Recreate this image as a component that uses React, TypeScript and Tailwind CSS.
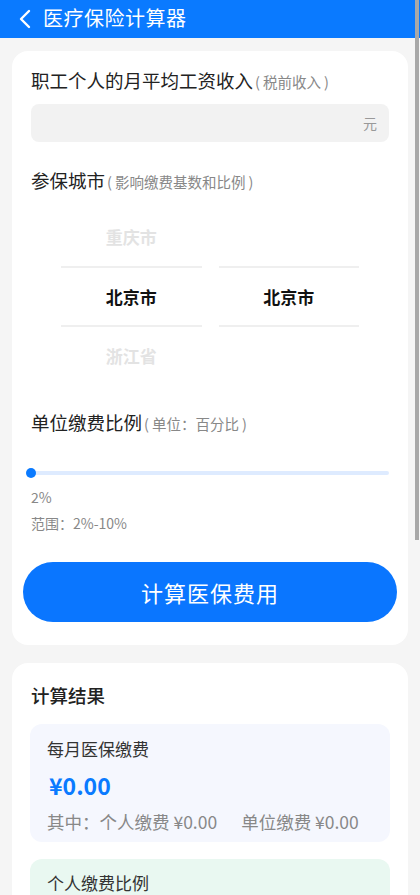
import React, { useState } from 'react';

const font = { fontFamily: '"Noto Sans CJK SC", "Noto Sans", sans-serif' };

// back chevron in header
const BackIcon = () => (
  <svg width="14" height="20" viewBox="0 0 14 20" fill="none">
    <path d="M11 2L3 10L11 18" stroke="white" strokeWidth="2.4" strokeLinecap="round" strokeLinejoin="round" />
  </svg>
);

const Label = ({ title, hint }: { title: string; hint: string }) => (
  <div className="flex items-baseline h-[26px] leading-[26px]">
    <span className="text-[18.5px] text-[#222]">{title}</span>
    <span className="text-[14.5px] text-[#888] flex">
      <span className="ml-[2px] mr-[3px]">(</span>
      {hint}
      <span className="ml-[3px]">)</span>
    </span>
  </div>
);

const PickerColumn = ({ items }: { items: [string, string, string] }) => (
  <div className="flex-1 flex flex-col">
    <div className="h-[60px] flex items-center justify-center text-[17px] font-bold text-[#e3e3e3] border-b-2 border-[#efefef]">
      {items[0]}
    </div>
    <div className="h-[59px] flex items-center justify-center text-[17px] font-bold text-[#111] border-b-2 border-[#efefef]">
      {items[1]}
    </div>
    <div className="h-[57px] flex items-center justify-center text-[17px] font-bold text-[#e3e3e3]">
      {items[2]}
    </div>
  </div>
);

export default function App() {
  const [salary, setSalary] = useState('');
  const [ratio] = useState(2);

  return (
    <div className="min-h-[895px] bg-[#f5f5f5] relative overflow-hidden" style={font}>
      {/* header */}
      <div className="h-[38px] bg-[#0a7aff] flex items-center pl-[18px] gap-[11px]">
        <BackIcon />
        <span className="text-[20px] text-white tracking-[0.5px] leading-none -mt-[3px]">医疗保险计算器</span>
      </div>

      {/* input card */}
      <div className="mx-3 mt-[13px] bg-white rounded-2xl px-[19px] pt-4 pb-[23px]">
        <Label title="职工个人的月平均工资收入" hint="税前收入" />
        <div className="mt-[11px] h-[38px] bg-[#f2f2f2] rounded-lg flex items-center pl-3 pr-3">
          <input
            value={salary}
            onChange={(e) => setSalary(e.target.value)}
            className="flex-1 bg-transparent outline-none text-[15px] text-[#222]"
          />
          <span className="text-[14px] text-[#999]">元</span>
        </div>

        <div className="mt-[25px]">
          <Label title="参保城市" hint="影响缴费基数和比例" />
        </div>
        <div className="mt-[15px] flex gap-[17px] px-[30px]">
          <PickerColumn items={['重庆市', '北京市', '浙江省']} />
          <PickerColumn items={['', '北京市', '']} />
        </div>

        <div className="mt-[25px]">
          <Label title="单位缴费比例" hint="单位：百分比" />
        </div>
        <div className="mt-[32px] h-3 relative flex items-center">
          <div className="h-1 w-full rounded-full bg-[#deebff]" />
          <div className="absolute -left-[5px] top-[1px] w-[10px] h-[10px] rounded-full bg-[#0a7aff]" />
        </div>
        <div className="mt-[9px] text-[14px] leading-[18px] text-[#888]">{ratio}%</div>
        <div className="mt-2 text-[14px] leading-[18px] text-[#888]">范围：2%-10%</div>

        <button className="mt-[30px] -mx-2 w-[calc(100%+16px)] h-[60px] rounded-full bg-[#0a76ff] text-white text-[22px] tracking-[1px]">
          计算医保费用
        </button>
      </div>

      {/* result card */}
      <div className="mx-3 mt-[18px] bg-white rounded-2xl px-[18px] pt-[19px] pb-6">
        <div className="h-[26px] leading-[26px] pl-px text-[18.5px] font-medium text-[#222]">计算结果</div>

        <div className="mt-4 bg-[#f5f7fe] rounded-xl px-[17px] pt-[14px] pb-[9px]">
          <div className="text-[17px] leading-[22px] text-[#333]">每月医保缴费</div>
          <div className="mt-[10px] text-[23px] leading-[30px] font-bold text-[#0a7aff] pl-[2px]">¥0.00</div>
          <div className="mt-[11px] text-[17.5px] leading-[22px] text-[#888] flex gap-[24px] whitespace-nowrap">
            <span>其中：个人缴费 ¥0.00</span>
            <span>单位缴费 ¥0.00</span>
          </div>
        </div>

        <div className="mt-[17px] bg-[#e9f8f1] rounded-xl px-[17px] pt-[13px] pb-4">
          <div className="text-[17px] leading-[22px] text-[#333]">个人缴费比例</div>
          <div className="mt-px mx-auto w-[170px] h-[4px] rounded-full border border-[#dedede]" />
        </div>
      </div>

      {/* page scrollbar thumb */}
      <div className="fixed top-0 right-[1px] w-[4px] h-[540px] bg-[#a8a8a8]" />
    </div>
  );
}
